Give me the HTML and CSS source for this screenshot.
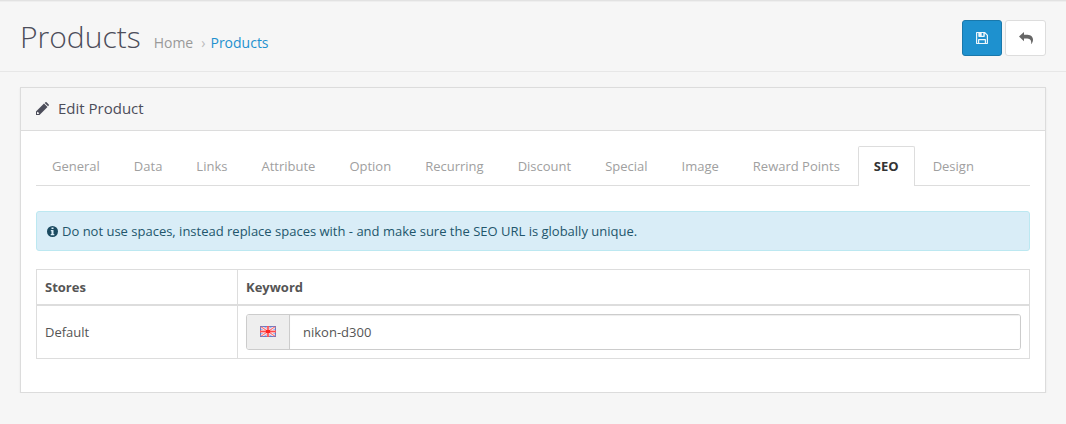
FILE: index.html
```html
<!DOCTYPE html>
<html lang="en">
<head>
<meta charset="utf-8">
<title>Products</title>
<link rel="stylesheet" href="styles.css">
</head>
<body>
<header class="page-header">
  <h1>Products</h1>
  <nav class="breadcrumb"><a>Home</a><span class="sep">›</span><a class="current">Products</a></nav>
  <div class="actions">
    <button class="btn primary" aria-label="Save"><svg width="12" height="12" viewBox="0 0 12 12"><path fill="#fff" fill-opacity=".92" fill-rule="evenodd" d="M.7 0H9l3 3v8.300a.7.7 0 0 1-.7.7H.7a.7.7 0 0 1-.7-.7V.7A.7.7 0 0 1 .7 0zM1.200 1v10H2V7.700a.7.7 0 0 1 .7-.7h6.600a.7.7 0 0 1 .7.7V11h.8V3.500L8.800 1.400v2.900a.7.7 0 0 1-.7.7H3a.7.7 0 0 1-.7-.7V1zm4.500 0v2.800h1.600V1zM3.200 8.200V11h5.600V8.200z"/></svg></button>
    <button class="btn" aria-label="Back"><svg width="14" height="12" viewBox="0 0 14 12"><path fill="#666" d="M0 4.500 5 0v2.700h2c4 0 7 1.300 7 5 0 1.600-.8 3-1.300 4.100-.3.300-.6.100-.5-.2.300-3.600-1.200-5-5.200-5H5v2.600z"/></svg></button>
  </div>
</header>
<main class="panel">
  <div class="panel-heading">
    <svg class="pencil" width="13" height="13" viewBox="0 0 13 13"><path fill="#4c4d5a" fill-rule="evenodd" d="m8 1.500 3.500 3.500-8 8H0V9.500zM8.700.9 9.400.300q.6-.6 1.200 0l2.100 2.100q.6.600 0 1.200l-.6.700zM1 10.500V12h1.500l.7-.7-1.500-1.500z"/></svg>
    <h3>Edit Product</h3>
  </div>
  <div class="panel-body">
    <ul class="tabs">
      <li>General</li><li>Data</li><li>Links</li><li>Attribute</li><li>Option</li><li>Recurring</li><li>Discount</li><li>Special</li><li>Image</li><li>Reward Points</li><li class="active">SEO</li><li>Design</li>
    </ul>
    <div class="alert"><svg width="11" height="11" viewBox="0 0 11 11"><circle cx="5.500" cy="5.500" r="5.500" fill="#1b4a60"/><path fill="#d9edf7" d="M4.500 1.500h2V3h-2zM3.800 4h2.700v4h.8v1.300H3.700V8h.8V5.300h-.7z"/></svg><span>Do not use spaces, instead replace spaces with - and make sure the SEO URL is globally unique.</span></div>
    <table class="keywords">
      <thead><tr><th class="store">Stores</th><th>Keyword</th></tr></thead>
      <tbody><tr><td>Default</td><td><div class="input-group"><span class="addon"><svg width="16" height="11" viewBox="0 0 16 11"><path fill="#a9b4e6" d="M0 0h16v11H0z"/><path stroke="#fff" stroke-width="2.500" d="m0 0 16 11M16 0 0 11"/><path stroke="#fbd5da" stroke-width="3" d="M8 0v11M0 5.500h16"/><path stroke="#f77" stroke-width="1.200" d="m0 0 16 11M16 0 0 11"/><path stroke="#ff4a4a" stroke-width="1.600" d="M8 0v11M0 5.500h16"/><path fill="#f22" d="M6 4h4v3H6z"/><path fill="none" stroke="#5866b5" stroke-opacity=".75" d="M.5.500h15v10H.5z"/><path stroke="#f55" d="M7 .5h2M7 10.500h2M.5 4.500v2M15.500 4.500v2"/></svg></span><input type="text" value="nikon-d300"></div></td></tr></tbody>
    </table>
  </div>
</main>
</body>
</html>
```
FILE: styles.css
```css
* { box-sizing: border-box; }
body { margin: 0; background: #f6f6f6; color: #555; font: 13px/20px "Open Sans", sans-serif; }
.page-header { height: 72px; border-bottom: 1px solid #e7e7e7; box-shadow: inset 0 1px #e2e2e2, inset 0 2px #eee; padding: 1px 20px 0; display: flex; align-items: flex-start; }
h1 { margin: 19px 13px 0 0; font-size: 30px; line-height: 33px; font-weight: 300; color: #4c4d5a; }
.breadcrumb { padding-top: 32px; font-size: 14px; color: #999; }
.sep { margin: 0 5px 0 8px; font-size: 14px; color: #bbb; }
.current { color: #1e91cf; }
.actions { margin: 19px 0 0 auto; display: flex; gap: 3px; }
.btn { width: 41px; height: 36px; padding: 0; border: 1px solid #ddd; border-radius: 3px; background: #fff; display: flex; align-items: center; justify-content: center; }
.primary { width: 40px; background: #1e91cf; border-color: #1978ab; }
.panel { margin: 15px 20px 0; height: 306px; border: 1px solid #dcdcdc; background: #fff; box-shadow: 0 1px 2px rgba(0, 0, 0, .07); }
.panel-heading { height: 43px; display: flex; align-items: center; gap: 9px; padding: 0 15px; border-bottom: 1px solid #dcdcdc; background: #f6f6f6; }
.pencil { margin-top: -2px; }
h3 { margin: -2px 0 0; font-size: 15px; font-weight: 400; color: #4c4d5a; }
.panel-body { padding: 15px; }
.tabs { display: flex; gap: 2px; margin: 0 0 25px; padding: 0; list-style: none; height: 40px; border-bottom: 1px solid #ddd; color: #a0a0a0; }
.tabs li { height: 40px; padding: 10px 16px; }
.tabs .active { padding: 9px 15px; border: 1px solid #ddd; border-bottom: 0; border-radius: 2px 2px 0 0; background: #fff; color: #333; font-weight: 700; }
.alert { height: 40px; display: flex; align-items: center; gap: 4px; padding: 0 10px; border: 1px solid #bce8f1; border-radius: 3px; background: #d9edf7; color: #22566c; }
.keywords { width: 100%; margin-top: 18px; border-collapse: collapse; table-layout: fixed; }
.keywords th, .keywords td { padding: 8px; border: 1px solid #ddd; text-align: left; }
.keywords th { height: 35px; padding: 7px 8px 6px; border-bottom-width: 2px; }
.keywords .store { width: 201px; }
.input-group { display: flex; height: 36px; border: 1px solid #ccc; border-radius: 3px; overflow: hidden; }
.addon { width: 43px; border-right: 1px solid #ccc; background: #eee; display: flex; align-items: center; justify-content: center; }
input { flex: 1; padding: 0 13px; border: 0; background: #fff; box-shadow: inset 0 1px 1px rgba(0, 0, 0, .075); color: #555; font: inherit; }
```
